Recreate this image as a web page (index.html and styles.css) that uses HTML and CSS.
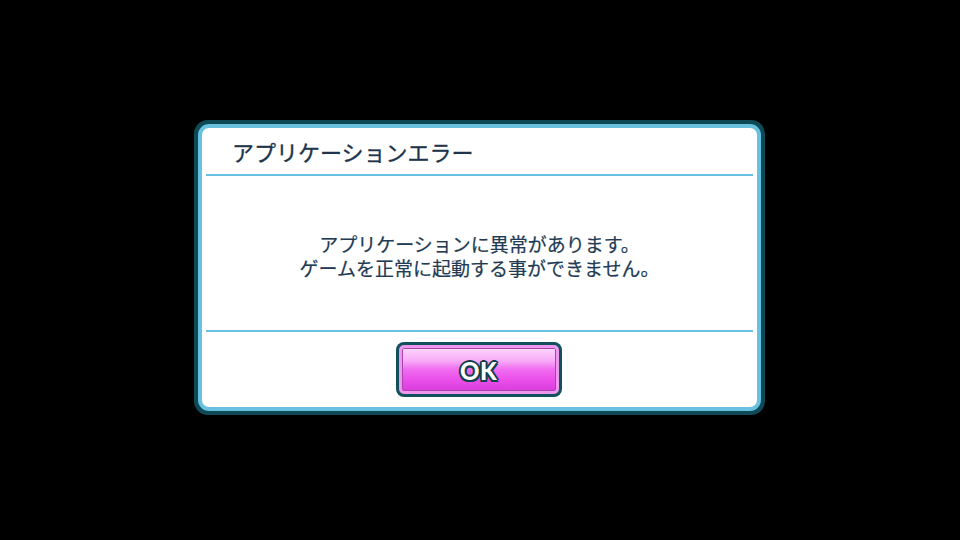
FILE: index.html
```html
<!DOCTYPE html>
<html lang="ja">
<head>
<meta charset="utf-8">
<title>アプリケーションエラー</title>
<link rel="stylesheet" href="styles.css">
</head>
<body>
<div class="screen">
  <div class="dialog">
    <div class="panel">
      <div class="title">アプリケーションエラー</div>
      <div class="rule"></div>
      <div class="message">
        <p>アプリケーションに異常があります。</p>
        <p>ゲームを正常に起動する事ができません。</p>
      </div>
      <div class="rule"></div>
      <div class="footer">
        <button class="ok"><span class="ok-face">OK</span></button>
      </div>
    </div>
  </div>
</div>
</body>
</html>
```
FILE: styles.css
```css
html, body {
  margin: 0;
  padding: 0;
  background: #000;
}
.screen {
  width: 960px;
  height: 540px;
  display: flex;
  align-items: flex-start;
  justify-content: center;
  padding-top: 120px;
  box-sizing: border-box;
  font-family: "Noto Sans CJK JP", "Noto Sans", sans-serif;
}
.dialog {
  width: 571px;
  height: 295px;
  box-sizing: border-box;
  background: #0e4a56;
  padding: 4px;
  border-radius: 14px;
  margin-left: -1px;
}
.panel {
  height: 100%;
  box-sizing: border-box;
  background: #fff;
  border: 4px solid #69c0df;
  border-radius: 11px;
  display: flex;
  flex-direction: column;
}
.title {
  height: 46px;
  box-sizing: border-box;
  padding-left: 30px;
  display: flex;
  align-items: center;
  font-size: 22px;
  font-weight: 400;
  color: #1d344c;
  -webkit-text-stroke: 0.3px #1d344c;
}
.rule {
  height: 2px;
  margin: 0 4px;
  background: #69c0df;
  flex: none;
}
.message {
  height: 154px;
  display: flex;
  flex-direction: column;
  justify-content: center;
  align-items: center;
  gap: 1px;
  font-size: 19px;
  font-weight: 400;
  color: #223a52;
  -webkit-text-stroke: 0.2px #223a52;
  padding-top: 4px;
  box-sizing: border-box;
}
.message p {
  margin: 0;
  line-height: 23px;
}
.footer {
  flex: 1;
  display: flex;
  justify-content: center;
  align-items: flex-start;
  padding-top: 10px;
}
.ok {
  width: 166px;
  height: 55px;
  padding: 3px;
  border: none;
  background: #12505b;
  border-radius: 8px;
  box-sizing: border-box;
  margin-left: -2px;
  cursor: pointer;
}
.ok-face {
  display: flex;
  align-items: center;
  justify-content: center;
  height: 100%;
  box-sizing: border-box;
  border: 3px solid #ef96ef;
  border-radius: 5px;
  box-shadow: inset 0 0 0 1px #a844ac;
  background: linear-gradient(#fcd8fc 0%, #f8aaf7 30%, #f06cf0 50%, #ea4eea 75%, #d83cdc 100%);
  font-family: "Lato", "Roboto", sans-serif;
  font-weight: 900;
  font-size: 24px;
  color: #fff;
  letter-spacing: 0.5px;
  padding-top: 1px;
  text-shadow:
    2px 0 0 #123f4a, -2px 0 0 #123f4a, 0 2px 0 #123f4a, 0 -2px 0 #123f4a,
    1.5px 1.5px 0 #123f4a, -1.5px 1.5px 0 #123f4a, 1.5px -1.5px 0 #123f4a, -1.5px -1.5px 0 #123f4a;
}
```
